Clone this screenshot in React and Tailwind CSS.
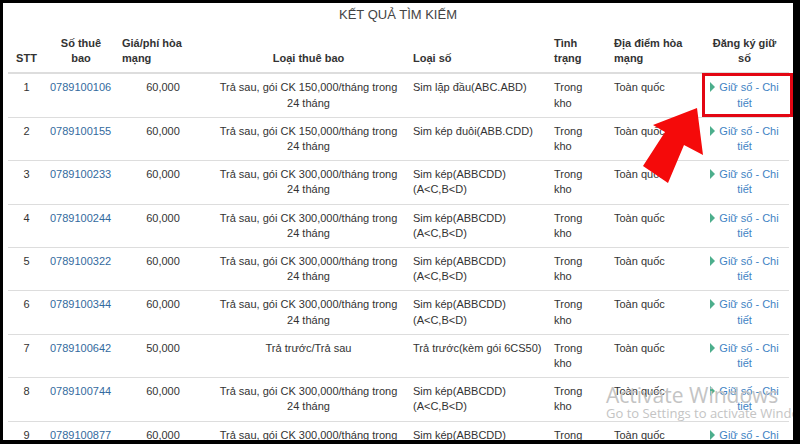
const rows = [
  { stt: 1, so: '0789100106', gia: '60,000', goi: 'Trả sau, gói CK 150,000/tháng trong 24 tháng', loai: 'Sim lặp đầu(ABC.ABD)' },
  { stt: 2, so: '0789100155', gia: '60,000', goi: 'Trả sau, gói CK 150,000/tháng trong 24 tháng', loai: 'Sim kép đuôi(ABB.CDD)' },
  { stt: 3, so: '0789100233', gia: '60,000', goi: 'Trả sau, gói CK 300,000/tháng trong 24 tháng', loai: 'Sim kép(ABBCDD) (A<C,B<D)' },
  { stt: 4, so: '0789100244', gia: '60,000', goi: 'Trả sau, gói CK 300,000/tháng trong 24 tháng', loai: 'Sim kép(ABBCDD) (A<C,B<D)' },
  { stt: 5, so: '0789100322', gia: '60,000', goi: 'Trả sau, gói CK 300,000/tháng trong 24 tháng', loai: 'Sim kép(ABBCDD) (A<C,B<D)' },
  { stt: 6, so: '0789100344', gia: '60,000', goi: 'Trả sau, gói CK 300,000/tháng trong 24 tháng', loai: 'Sim kép(ABBCDD) (A<C,B<D)' },
  { stt: 7, so: '0789100642', gia: '50,000', goi: 'Trả trước/Trả sau', loai: 'Trả trước(kèm gói 6CS50)' },
  { stt: 8, so: '0789100744', gia: '60,000', goi: 'Trả sau, gói CK 300,000/tháng trong 24 tháng', loai: 'Sim kép(ABBCDD) (A<C,B<D)' },
  { stt: 9, so: '0789100877', gia: '60,000', goi: 'Trả sau, gói CK 300,000/tháng trong 24 tháng', loai: 'Sim kép(ABBCDD) (A<C,B<D)' },
];

const th = 'px-[5px] pt-[9px] pb-[6px] align-bottom font-bold';
const td = 'px-[5px] pt-[6px] pb-[6px] align-top';

export default function App() {
  return (
    <div className="w-[800px] h-[444px] bg-black pt-[3px] pl-[3px] overflow-hidden">
      <div
        className="relative w-[790px] h-[437px] bg-white overflow-hidden text-[#333] text-[11px] leading-[15.2px]"
        style={{ fontFamily: '"Liberation Sans", Arial, sans-serif' }}
      >
        <div className="h-[24px] flex items-center justify-center text-[13px] text-[#444]">KẾT QUẢ TÌM KIẾM</div>

        <table className="ml-[5px] w-[781px] table-fixed border-collapse">
          <colgroup>
            <col className="w-[37px]" />
            <col className="w-[72px]" />
            <col className="w-[92px]" />
            <col className="w-[199px]" />
            <col className="w-[141px]" />
            <col className="w-[60px]" />
            <col className="w-[91px]" />
            <col className="w-[89px]" />
          </colgroup>
          <thead>
            <tr className="border-b-2 border-[#ddd]">
              <th className={`${th} text-center`}>STT</th>
              <th className={`${th} text-center`}>Số thuê bao</th>
              <th className={`${th} text-left`}>Giá/phí hòa mạng</th>
              <th className={`${th} text-center`}>Loại thuê bao</th>
              <th className={`${th} text-left`}>Loại số</th>
              <th className={`${th} text-left`}>Tình trạng</th>
              <th className={`${th} text-left`}>Địa điểm hòa mạng</th>
              <th className={`${th} text-center`}>Đăng ký giữ số</th>
            </tr>
          </thead>
          <tbody>
            {rows.map((r) => (
              <tr key={r.stt} className="border-b border-[#ddd]">
                <td className={`${td} text-center`}>{r.stt}</td>
                <td className={`${td} text-[#336a9e]`}>{r.so}</td>
                <td className={`${td} text-center`}>{r.gia}</td>
                <td className={`${td} text-center`}>{r.goi}</td>
                <td className={td}>{r.loai}</td>
                <td className={`${td} pr-[14px]`}>Trong kho</td>
                <td className={td}>Toàn quốc</td>
                <td className={`${td} text-center text-[#3f83c4]`}>
                  <span className="inline-block w-0 h-0 mr-[4px] border-y-[5px] border-y-transparent border-l-[5px] border-l-[#4cae8c] align-[-1px]" />
                  Giữ số - Chi tiết
                </td>
              </tr>
            ))}
          </tbody>
        </table>

        {/* annotation: red box + arrow */}
        <div className="absolute left-[699px] top-[70px] w-[91px] h-[44px] border-[3px] border-[#e30613]" />
        <svg className="absolute left-0 top-0" width="790" height="437" viewBox="0 0 790 437">
          <polygon
            points="694,105 700,152 681,142 665,180 640,163 662,129 650,122"
            fill="#f50a0a"
          />
        </svg>

        {/* windows watermark */}
        <div
          className="absolute left-[603px] top-[382px] whitespace-nowrap text-[#c4c4c4] pointer-events-none"
          style={{ fontFamily: '"Open Sans", "Noto Sans", sans-serif' }}
        >
          <div className="text-[21px] leading-[20px]">Activate Windows</div>
          <div className="text-[13px] leading-[17px]">Go to Settings to activate Windows.</div>
        </div>
      </div>
    </div>
  );
}
